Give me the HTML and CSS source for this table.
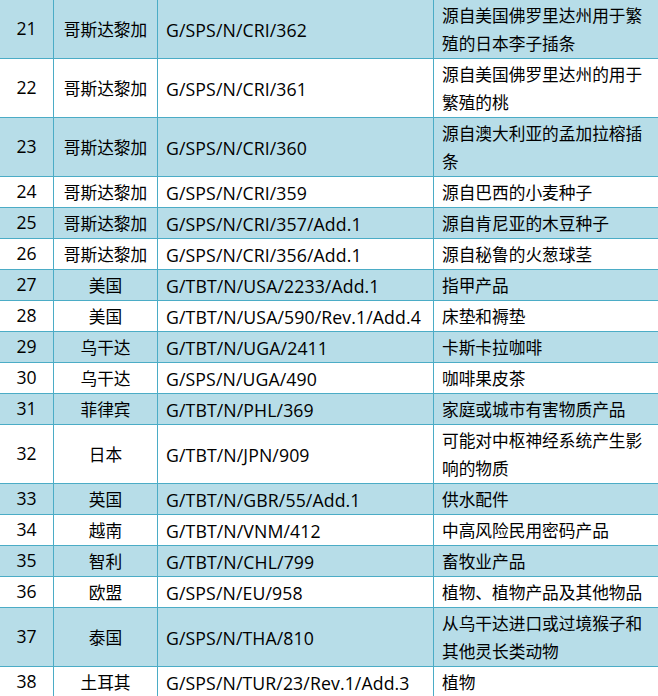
FILE: index.html
```html
<!DOCTYPE html>
<html lang="zh-CN">
<head>
<meta charset="utf-8">
<title>通报列表</title>
<link rel="stylesheet" href="styles.css">
</head>
<body>
<table class="grid">
  <colgroup>
    <col class="c-no">
    <col class="c-country">
    <col class="c-code">
    <col class="c-desc">
  </colgroup>
  <tbody>
    <tr class="alt"><td class="no">21</td><td class="country">哥斯达黎加</td><td class="code">G/SPS/N/CRI/362</td><td class="desc">源自美国佛罗里达州用于繁殖的日本李子插条</td></tr>
    <tr><td class="no">22</td><td class="country">哥斯达黎加</td><td class="code">G/SPS/N/CRI/361</td><td class="desc">源自美国佛罗里达州的用于繁殖的桃</td></tr>
    <tr class="alt"><td class="no">23</td><td class="country">哥斯达黎加</td><td class="code">G/SPS/N/CRI/360</td><td class="desc">源自澳大利亚的孟加拉榕插条</td></tr>
    <tr><td class="no">24</td><td class="country">哥斯达黎加</td><td class="code">G/SPS/N/CRI/359</td><td class="desc">源自巴西的小麦种子</td></tr>
    <tr class="alt"><td class="no">25</td><td class="country">哥斯达黎加</td><td class="code">G/SPS/N/CRI/357/Add.1</td><td class="desc">源自肯尼亚的木豆种子</td></tr>
    <tr><td class="no">26</td><td class="country">哥斯达黎加</td><td class="code">G/SPS/N/CRI/356/Add.1</td><td class="desc">源自秘鲁的火葱球茎</td></tr>
    <tr class="alt"><td class="no">27</td><td class="country">美国</td><td class="code">G/TBT/N/USA/2233/Add.1</td><td class="desc">指甲产品</td></tr>
    <tr><td class="no">28</td><td class="country">美国</td><td class="code">G/TBT/N/USA/590/Rev.1/Add.4</td><td class="desc">床垫和褥垫</td></tr>
    <tr class="alt"><td class="no">29</td><td class="country">乌干达</td><td class="code">G/TBT/N/UGA/2411</td><td class="desc">卡斯卡拉咖啡</td></tr>
    <tr><td class="no">30</td><td class="country">乌干达</td><td class="code">G/SPS/N/UGA/490</td><td class="desc">咖啡果皮茶</td></tr>
    <tr class="alt"><td class="no">31</td><td class="country">菲律宾</td><td class="code">G/TBT/N/PHL/369</td><td class="desc">家庭或城市有害物质产品</td></tr>
    <tr><td class="no">32</td><td class="country">日本</td><td class="code">G/TBT/N/JPN/909</td><td class="desc">可能对中枢神经系统产生影响的物质</td></tr>
    <tr class="alt"><td class="no">33</td><td class="country">英国</td><td class="code">G/TBT/N/GBR/55/Add.1</td><td class="desc">供水配件</td></tr>
    <tr><td class="no">34</td><td class="country">越南</td><td class="code">G/TBT/N/VNM/412</td><td class="desc">中高风险民用密码产品</td></tr>
    <tr class="alt"><td class="no">35</td><td class="country">智利</td><td class="code">G/TBT/N/CHL/799</td><td class="desc">畜牧业产品</td></tr>
    <tr><td class="no">36</td><td class="country">欧盟</td><td class="code">G/SPS/N/EU/958</td><td class="desc">植物、植物产品及其他物品</td></tr>
    <tr class="alt"><td class="no">37</td><td class="country">泰国</td><td class="code">G/SPS/N/THA/810</td><td class="desc">从乌干达进口或过境猴子和其他灵长类动物</td></tr>
    <tr><td class="no">38</td><td class="country">土耳其</td><td class="code">G/SPS/N/TUR/23/Rev.1/Add.3</td><td class="desc">植物</td></tr>
  </tbody>
</table>
</body>
</html>
```
FILE: styles.css
```css
html, body {
  margin: 0;
  padding: 0;
  background: #ffffff;
  overflow: hidden;
}

.grid {
  border-collapse: collapse;
  table-layout: fixed;
  width: 660px;
  margin: -1px 0 0 -1px;
  font-family: "Open Sans", "Noto Sans CJK SC", sans-serif;
  font-size: 16.7px;
  color: #000;
}

.c-no { width: 54px; }
.c-country { width: 104px; }
.c-code { width: 276px; }
.c-desc { width: 226px; }

.grid td {
  border: 1px solid #4bacc6;
  line-height: 28px;
  padding: 2px 8px 0 8px;
  vertical-align: middle;
  white-space: nowrap;
  overflow: hidden;
}

.grid tr.alt td {
  background: #b7dde8;
}

.grid td.no {
  text-align: center;
  font-size: 17.6px;
  padding: 0 4px 2px 4px;
}

.grid td.country {
  text-align: center;
  padding-left: 2px;
  padding-right: 2px;
}

.grid td.code {
  font-size: 17.7px;
  letter-spacing: 0.1px;
}

.grid td.desc {
  white-space: normal;
  padding-right: 6px;
}
```
